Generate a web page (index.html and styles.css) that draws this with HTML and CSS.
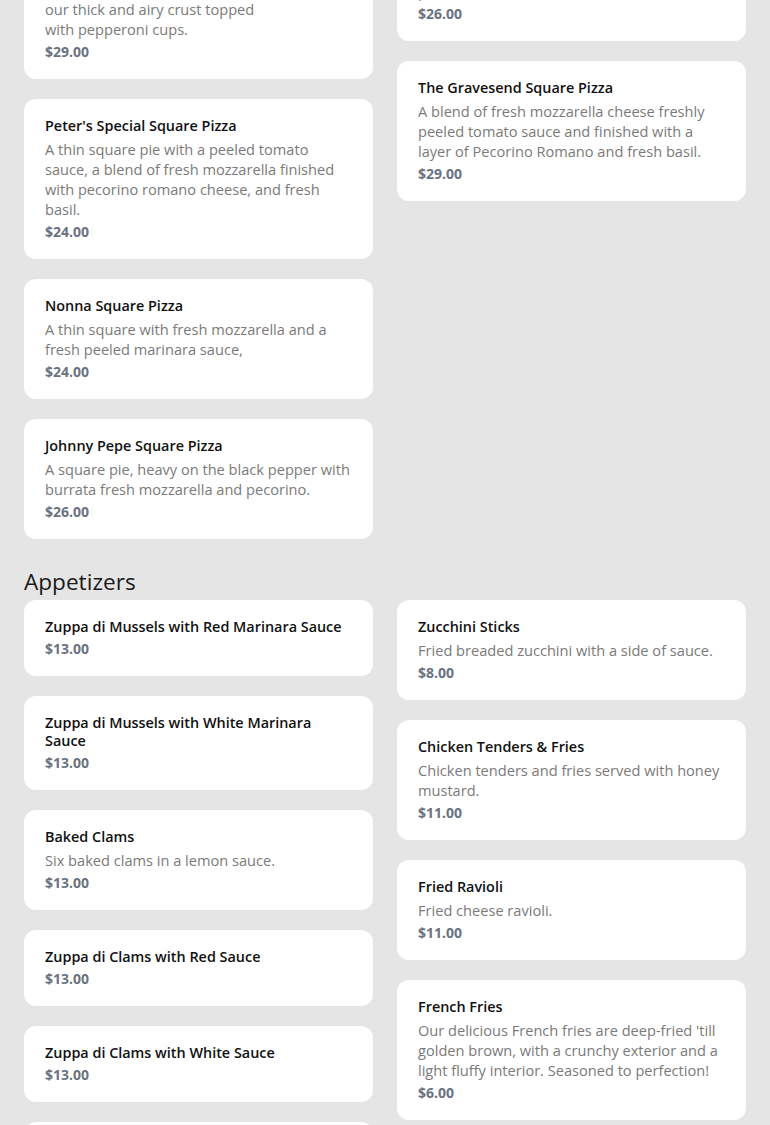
FILE: index.html
```html
<!doctype html>
<html lang="en">
  <head>
    <meta charset="utf-8" />
    <meta name="viewport" content="width=device-width, initial-scale=1" />
    <title>Menu</title>
    <link rel="stylesheet" href="styles.css">
  </head>
  <body>
    <main class="menu">
      <section class="section">
        <h2 class="section-title">Square Pizza</h2>
        <div class="grid">
          <div class="col">
            <div class="item">
              <div class="item-name">Grandma's Famous Pepperoni Cup Square Pizza Pie</div>
              <div class="item-desc">Crispy pepperoni cups, fresh mozzarella and our tomato sauce, baked on<br>our thick and airy crust topped<br>with pepperoni cups.</div>
              <div class="item-price">$29.00</div>
            </div>
            <div class="item">
              <div class="item-name">Peter's Special Square Pizza</div>
              <div class="item-desc">A thin square pie with a peeled tomato sauce, a blend of fresh mozzarella finished with pecorino romano cheese, and fresh basil.</div>
              <div class="item-price">$24.00</div>
            </div>
            <div class="item">
              <div class="item-name">Nonna Square Pizza</div>
              <div class="item-desc">A thin square with fresh mozzarella and a fresh peeled marinara sauce,</div>
              <div class="item-price">$24.00</div>
            </div>
            <div class="item">
              <div class="item-name">Johnny Pepe Square Pizza</div>
              <div class="item-desc">A square pie, heavy on the black pepper with burrata fresh mozzarella and pecorino.</div>
              <div class="item-price">$26.00</div>
            </div>
          </div>
          <div class="col">
            <div class="item">
              <div class="item-name">Vodka Square Pizza</div>
              <div class="item-desc">A thick square pie topped with our creamy vodka sauce, fresh mozzarella and grated pecorino romano.</div>
              <div class="item-price">$26.00</div>
            </div>
            <div class="item">
              <div class="item-name">The Gravesend Square Pizza</div>
              <div class="item-desc">A blend of fresh mozzarella cheese freshly peeled tomato sauce and finished with a layer of Pecorino Romano and fresh basil.</div>
              <div class="item-price">$29.00</div>
            </div>
          </div>
        </div>
      </section>

      <section class="section">
        <h2 class="section-title">Appetizers</h2>
        <div class="grid">
          <div class="col">
            <div class="item">
              <div class="item-name">Zuppa di Mussels with Red Marinara Sauce</div>
              <div class="item-price">$13.00</div>
            </div>
            <div class="item">
              <div class="item-name">Zuppa di Mussels with White Marinara Sauce</div>
              <div class="item-price">$13.00</div>
            </div>
            <div class="item">
              <div class="item-name">Baked Clams</div>
              <div class="item-desc">Six baked clams in a lemon sauce.</div>
              <div class="item-price">$13.00</div>
            </div>
            <div class="item">
              <div class="item-name">Zuppa di Clams with Red Sauce</div>
              <div class="item-price">$13.00</div>
            </div>
            <div class="item">
              <div class="item-name">Zuppa di Clams with White Sauce</div>
              <div class="item-price">$13.00</div>
            </div>
            <div class="item">
              <div class="item-name">Fried Calamari</div>
              <div class="item-desc">Served with a side of marinara sauce.</div>
              <div class="item-price">$16.00</div>
            </div>
          </div>
          <div class="col">
            <div class="item">
              <div class="item-name">Zucchini Sticks</div>
              <div class="item-desc">Fried breaded zucchini with a side of sauce.</div>
              <div class="item-price">$8.00</div>
            </div>
            <div class="item">
              <div class="item-name">Chicken Tenders &amp; Fries</div>
              <div class="item-desc">Chicken tenders and fries served with honey mustard.</div>
              <div class="item-price">$11.00</div>
            </div>
            <div class="item">
              <div class="item-name">Fried Ravioli</div>
              <div class="item-desc">Fried cheese ravioli.</div>
              <div class="item-price">$11.00</div>
            </div>
            <div class="item">
              <div class="item-name">French Fries</div>
              <div class="item-desc">Our delicious French fries are deep-fried 'till golden brown, with a crunchy exterior and a light fluffy interior. Seasoned to perfection!</div>
              <div class="item-price">$6.00</div>
            </div>
          </div>
        </div>
      </section>
    </main>
  </body>
</html>
```

FILE: styles.css
```css
* {
  box-sizing: border-box;
}

body {
  margin: 0;
  background: #e5e5e5;
  font-family: "Open Sans", "Segoe UI", Arial, sans-serif;
  color: #111;
}

/* page is shown scrolled a little way down */
.menu {
  margin-top: -131px;
  padding: 0 24px 40px;
}

.section + .section {
  margin-top: 29px;
}

.section-title {
  margin: 0 0 4px 0;
  font-size: 22.6px;
  font-weight: 400;
  line-height: 28px;
  color: #1a1a1a;
}

.grid {
  display: grid;
  grid-template-columns: 1fr 1fr;
  column-gap: 24px;
  align-items: start;
}

.col {
  display: flex;
  flex-direction: column;
  gap: 20px;
}

.item {
  background: #fff;
  border-radius: 12px;
  padding: 18px 21px 17px;
}

.item-name {
  font-size: 14.4px;
  font-weight: 600;
  line-height: 18px;
  color: #111;
}

.item-desc {
  margin-top: 4px;
  font-size: 14.6px;
  line-height: 20px;
  color: #7a7a7a;
}

.item-price {
  margin-top: 3px;
  font-size: 14px;
  font-weight: 700;
  line-height: 20px;
  color: #6b7280;
}
```
